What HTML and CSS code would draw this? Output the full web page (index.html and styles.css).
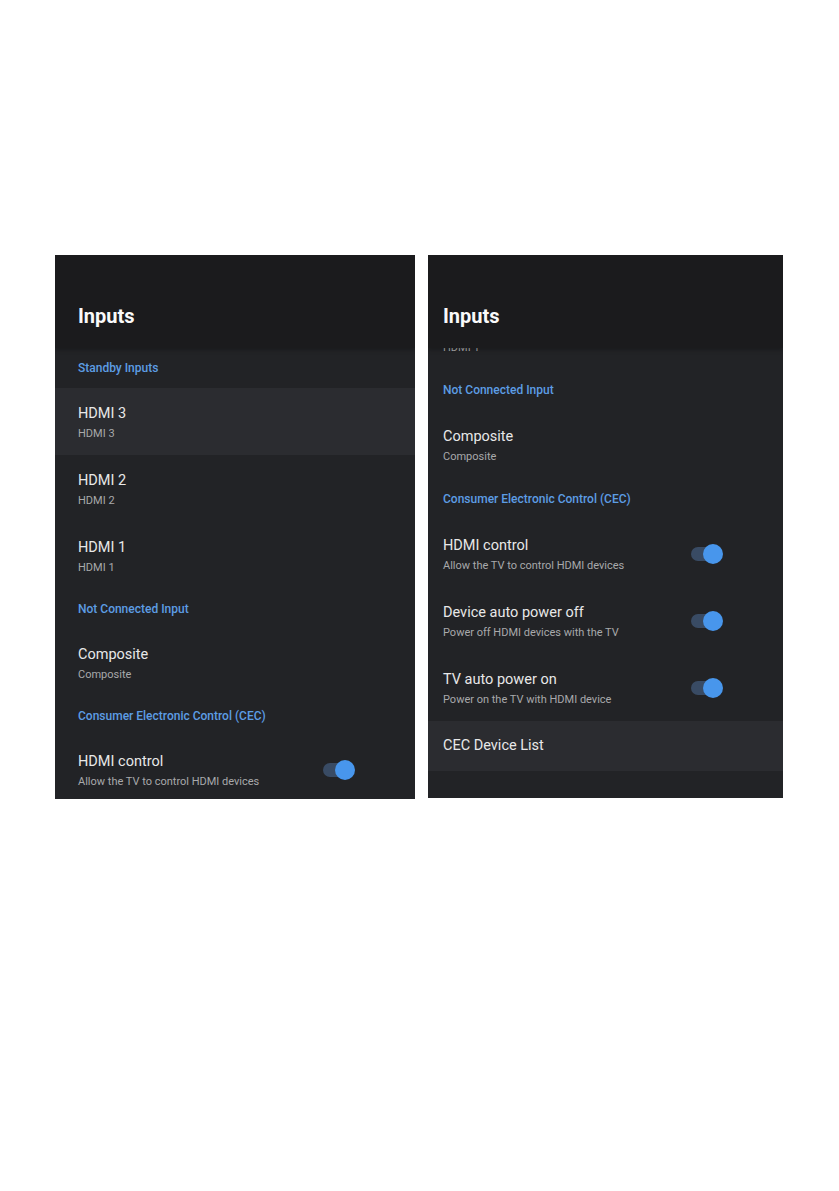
FILE: index.html
```html
<!DOCTYPE html>
<html lang="en">
<head>
  <meta charset="UTF-8" />
  <meta name="viewport" content="width=device-width, initial-scale=1.0"/>
  <title>Inputs</title>
  <link rel="stylesheet" href="styles.css">
</head>
<body>

  <div class="screens">

    <section class="panel panel-left">
      <header class="panel-head">
        <h1>Inputs</h1>
      </header>
      <div class="list">
        <div class="category">Standby Inputs</div>
        <div class="item focused">
          <div class="item-text">
            <h2>HDMI 3</h2>
            <p>HDMI 3</p>
          </div>
        </div>
        <div class="item">
          <div class="item-text">
            <h2>HDMI 2</h2>
            <p>HDMI 2</p>
          </div>
        </div>
        <div class="item">
          <div class="item-text">
            <h2>HDMI 1</h2>
            <p>HDMI 1</p>
          </div>
        </div>
        <div class="category">Not Connected Input</div>
        <div class="item">
          <div class="item-text">
            <h2>Composite</h2>
            <p>Composite</p>
          </div>
        </div>
        <div class="category">Consumer Electronic Control (CEC)</div>
        <div class="item">
          <div class="item-text">
            <h2>HDMI control</h2>
            <p>Allow the TV to control HDMI devices</p>
          </div>
          <span class="toggle on"></span>
        </div>
      </div>
    </section>

    <section class="panel panel-right">
      <header class="panel-head">
        <h1>Inputs</h1>
      </header>
      <div class="list scrolled">
        <div class="item">
          <div class="item-text">
            <h2>HDMI 1</h2>
            <p>HDMI 1</p>
          </div>
        </div>
        <div class="category">Not Connected Input</div>
        <div class="item">
          <div class="item-text">
            <h2>Composite</h2>
            <p>Composite</p>
          </div>
        </div>
        <div class="category">Consumer Electronic Control (CEC)</div>
        <div class="item">
          <div class="item-text">
            <h2>HDMI control</h2>
            <p>Allow the TV to control HDMI devices</p>
          </div>
          <span class="toggle on"></span>
        </div>
        <div class="item">
          <div class="item-text">
            <h2>Device auto power off</h2>
            <p>Power off HDMI devices with the TV</p>
          </div>
          <span class="toggle on"></span>
        </div>
        <div class="item">
          <div class="item-text">
            <h2>TV auto power on</h2>
            <p>Power on the TV with HDMI device</p>
          </div>
          <span class="toggle on"></span>
        </div>
        <div class="item single focused">
          <div class="item-text">
            <h2>CEC Device List</h2>
          </div>
        </div>
      </div>
    </section>

  </div>

</body>
</html>
```

FILE: styles.css
```css
* {
  margin: 0;
  padding: 0;
  box-sizing: border-box;
}

body {
  font-family: Roboto, 'Liberation Sans', sans-serif;
  background-color: #fff;
  color: #e6e6e6;
}

.screens {
  display: flex;
  align-items: flex-start;
  gap: 13px;
  padding: 255px 0 0 55px;
}

.panel {
  display: flex;
  flex-direction: column;
  background-color: #222326;
  overflow: hidden;
}

.panel-left {
  width: 360px;
  height: 544px;
}

.panel-right {
  width: 355px;
  height: 543px;
}

.panel-head {
  height: 93px;
  flex-shrink: 0;
  background-color: #1b1b1d;
  position: relative;
  z-index: 1;
  box-shadow: 0 2px 4px rgba(0, 0, 0, 0.25);
}

.panel-head h1 {
  font-size: 20px;
  font-weight: 700;
  color: #fafafa;
  line-height: 26px;
  padding-top: 48px;
}

.panel-left .panel-head h1,
.panel-left .category,
.panel-left .item {
  padding-left: 23px;
}

.panel-right .panel-head h1,
.panel-right .category,
.panel-right .item {
  padding-left: 15px;
}

.list {
  flex: 1;
  overflow: hidden;
}

.list.scrolled .item:first-child {
  margin-top: -46px;
}

.category {
  height: 40px;
  display: flex;
  align-items: center;
  font-size: 12px;
  font-weight: 500;
  color: #5d9de4;
}

.panel-right .category {
  height: 42px;
}

.item {
  height: 67px;
  display: flex;
  align-items: center;
  padding-top: 3px;
  padding-right: 60px;
}

.item.focused {
  background-color: #2b2c30;
}

.item.single {
  height: 50px;
  padding-top: 0;
}

.item-text {
  flex: 1;
}

.item h2 {
  font-size: 14.5px;
  font-weight: 400;
  line-height: 20px;
  color: #e8e8e8;
}

.item p {
  font-size: 11px;
  line-height: 16px;
  margin-top: 2px;
  color: #a8a9ab;
}

.toggle {
  width: 32px;
  height: 20px;
  flex-shrink: 0;
  position: relative;
  margin-top: -3px;
}

.toggle::before {
  content: "";
  position: absolute;
  left: 0;
  top: 3px;
  width: 26px;
  height: 14px;
  border-radius: 7px;
  background-color: #394b64;
}

.toggle::after {
  content: "";
  position: absolute;
  right: 0;
  top: 0;
  width: 20px;
  height: 20px;
  border-radius: 50%;
  background-color: #4896ec;
}
```
